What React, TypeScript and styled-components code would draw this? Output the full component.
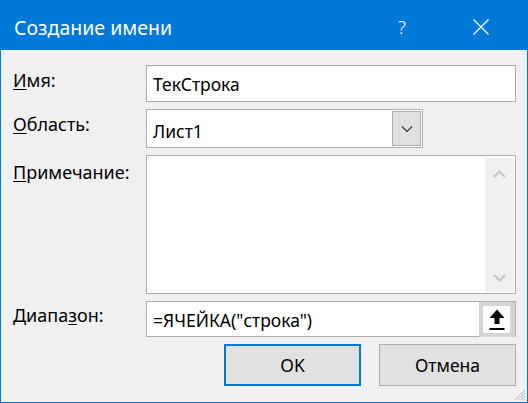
import React from "react";
import styled, { createGlobalStyle } from "styled-components";

const Global = createGlobalStyle`
  html, body { margin: 0; padding: 0; background: #ffffff; }
  * { box-sizing: border-box; }
  body { font-family: "Noto Sans", "Open Sans", sans-serif; }
`;

const Dialog = styled.div`
  position: relative;
  width: 528px;
  height: 403px;
  background: #0078d7;
  padding: 0 1px 1px 1px;
  display: flex;
  flex-direction: column;
  overflow: hidden;
`;

const TitleBar = styled.div`
  height: 50px;
  display: flex;
  align-items: center;
  padding: 4px 0 0 13px;
  color: #ffffff;
`;

const Title = styled.div`
  flex: 1;
  font-size: 19.5px;
  font-family: "Noto Sans", sans-serif;
`;

const TitleButton = styled.div<{ $w: number; $mr: number }>`
  width: ${(p) => p.$w}px;
  margin-right: ${(p) => p.$mr}px;
  display: flex;
  justify-content: center;
  align-items: center;
  font-size: 19px;
  font-weight: 300;
`;

const Body = styled.div`
  flex: 1;
  background: #f0f0f0;
  padding: 15px 11px 0 12px;
  display: grid;
  grid-template-columns: 133px 1fr;
  grid-template-rows: 37px 39px 139px 36px 42px;
  row-gap: 7px;
  font-size: 17.5px;
  color: #000;
`;

const Label = styled.div<{ $top: number }>`
  padding-top: ${(p) => p.$top}px;
  font-size: 18px;
  line-height: 20px;
  white-space: nowrap;
`;

const U = styled.span`
  text-decoration: underline;
  text-underline-offset: 2px;
  text-decoration-thickness: 1px;
`;

const TextBox = styled.div`
  background: #ffffff;
  border: 1px solid #adadad;
  display: flex;
  align-items: center;
  padding-left: 6px;
  font-size: 17.5px;
  white-space: nowrap;
  position: relative;
`;

const SelectBox = styled(TextBox)`
  width: 277px;
  padding-top: 4px;
  padding-right: 1px;
  align-items: stretch;
`;

const SelectValue = styled.div`
  flex: 1;
  display: flex;
  align-items: center;
`;

const DropButton = styled.div`
  width: 29px;
  margin: -3px 0 1px 0;
  background: #e1e1e1;
  border: 1px solid #adadad;
  display: flex;
  align-items: center;
  justify-content: center;
`;

const MemoBox = styled.div`
  background: #ffffff;
  border: 1px solid #adadad;
  display: flex;
  justify-content: flex-end;
  padding: 2px 1px 1px 0;
`;

const ScrollBar = styled.div`
  width: 29px;
  background: #f0f0f0;
  display: flex;
  flex-direction: column;
  justify-content: space-between;
  align-items: center;
  padding: 12px 0 10px;
`;

const RangeBox = styled(TextBox)`
  padding-top: 2px;
  padding-right: 0;
`;

const RangeText = styled.div`
  flex: 1;
`;

const RefButton = styled.div`
  align-self: stretch;
  width: 36px;
  margin: -2px 0 -1px 0;
  border: 4px solid #d4d4d4;
  border-right-width: 5px;
  background: #ffffff;
  display: flex;
  align-items: center;
  justify-content: center;
`;

const ButtonRow = styled.div`
  grid-column: 1 / 3;
  display: flex;
  justify-content: flex-end;
  gap: 18px;
`;

const Button = styled.div<{ $primary?: boolean }>`
  width: 137px;
  height: 42px;
  background: #e1e1e1;
  border: ${(p) => (p.$primary ? "2px solid #0078d7" : "1px solid #adadad")};
  display: flex;
  align-items: center;
  justify-content: center;
  font-size: 17.5px;
`;

const Grip = styled.svg`
  position: absolute;
  right: 2px;
  bottom: 2px;
`;

export default function App() {
  return (
    <>
      <Global />
      <Dialog>
        <TitleBar>
          <Title>Создание имени</Title>
          <TitleButton $w={40} $mr={39}>?</TitleButton>
          <TitleButton $w={40} $mr={26}>
            <svg width="16" height="16" viewBox="0 0 16 16">
              <path d="M0.5 0.5 L15.5 15.5 M15.5 0.5 L0.5 15.5" stroke="#fff" strokeWidth="1.3" fill="none" />
            </svg>
          </TitleButton>
        </TitleBar>
        <Body>
          <Label $top={5}>
            <U>И</U>мя:
          </Label>
          <TextBox>ТекСтрока</TextBox>

          <Label $top={5}>
            <U>О</U>бласть:
          </Label>
          <SelectBox>
            <SelectValue>Лист1</SelectValue>
            <DropButton>
              <svg width="12" height="8" viewBox="0 0 12 8">
                <path d="M1 1.5 L6 6.5 L11 1.5" stroke="#333" strokeWidth="1.1" fill="none" />
              </svg>
            </DropButton>
          </SelectBox>

          <Label $top={7}>
            <U>П</U>римечание:
          </Label>
          <MemoBox>
            <ScrollBar>
              <svg width="13" height="8" viewBox="0 0 13 8">
                <path d="M1 7 L6.5 1.5 L12 7" stroke="#c4c4c4" strokeWidth="2" fill="none" />
              </svg>
              <svg width="13" height="8" viewBox="0 0 13 8">
                <path d="M1 1 L6.5 6.5 L12 1" stroke="#c4c4c4" strokeWidth="2" fill="none" />
              </svg>
            </ScrollBar>
          </MemoBox>

          <Label $top={4}>
            Диапа<U>з</U>он:
          </Label>
          <RangeBox>
            <RangeText>=ЯЧЕЙКА("строка")</RangeText>
            <RefButton>
              <svg width="16" height="22" viewBox="0 0 16 22">
                <path d="M8 0.5 L15.5 9 L10.5 9 L10.5 15 L5.5 15 L5.5 9 L0.5 9 Z" fill="#000" />
                <rect x="0.5" y="19" width="15" height="2" fill="#000" />
              </svg>
            </RefButton>
          </RangeBox>

          <ButtonRow>
            <Button $primary>OK</Button>
            <Button>Отмена</Button>
          </ButtonRow>
        </Body>
        <Grip width="12" height="12" viewBox="0 0 12 12">
          <path d="M11 1 L1 11 M11 4 L4 11 M11 7 L7 11 M11 10 L10 11" stroke="#b5b5b5" strokeWidth="1" />
        </Grip>
      </Dialog>
    </>
  );
}
